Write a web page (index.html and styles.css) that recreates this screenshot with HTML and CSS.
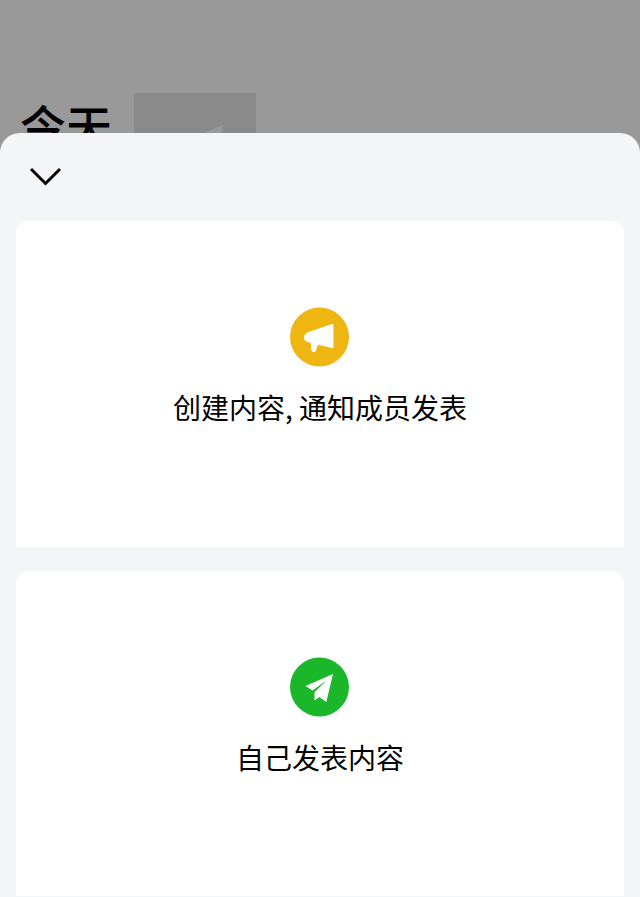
FILE: index.html
```html
<!DOCTYPE html>
<html lang="zh-CN">
<head>
<meta charset="utf-8">
<meta name="viewport" content="width=device-width, initial-scale=1">
<title>发表</title>
<link rel="stylesheet" href="styles.css">
</head>
<body>
<header class="backdrop">
  <h1 class="day">今天</h1>
  <div class="thumb">
    <svg class="thumb-icon" viewBox="0 0 60 60" aria-hidden="true"><path d="M2 25 58 1 46 56 29 44 20 56 18 36Z"/></svg>
  </div>
</header>
<main class="sheet">
  <button class="close" type="button" aria-label="收起">
    <svg viewBox="0 0 32 20" aria-hidden="true"><path d="M1 2 15.500 16.500 30 2"/></svg>
  </button>
  <button class="card" type="button">
    <svg class="badge" viewBox="0 0 60 60" aria-hidden="true">
      <circle class="amber" cx="29.500" cy="30" r="29.500"/>
      <path class="glyph" d="M18.500 25 42 17Q43.500 16.500 43.500 18V40Q43.500 41.500 42 41L28 37.700 26 43.500Q25.500 45 24 45H23Q21.500 45 21.500 43.500L20.700 36 17.500 35Q14 33.500 14 30.500 14 26.500 18.500 25Z"/>
    </svg>
    <span>创建内容, 通知成员发表</span>
  </button>
  <button class="card" type="button">
    <svg class="badge" viewBox="0 0 60 60" aria-hidden="true">
      <circle class="green" cx="29.500" cy="30" r="29.500"/>
      <path class="glyph" d="M43 17 15.500 29 22.500 33.500 36.500 23.500 24.500 35.300V43.500L29.400 40 36.300 45Z"/>
    </svg>
    <span>自己发表内容</span>
  </button>
</main>
</body>
</html>
```
FILE: styles.css
```css
* {
  box-sizing: border-box;
}

body {
  margin: 0;
  min-height: 100vh;
  display: flex;
  flex-direction: column;
  background: #999;
  color: #000;
  font-family: "Noto Sans CJK SC", sans-serif;
}

.backdrop {
  height: 133px;
  padding: 93px 20px 0;
  display: flex;
  gap: 22px;
  overflow: hidden;
}

.day {
  margin: 0;
  font-size: 46px;
  line-height: 62px;
  font-weight: 500;
}

.thumb {
  width: 122px;
  height: 122px;
  flex: none;
  display: grid;
  place-items: center;
  background: #8a8a8a;
}

.thumb-icon {
  width: 60px;
  height: 60px;
  fill: #999;
}

.sheet {
  flex: 1;
  display: flex;
  flex-direction: column;
  gap: 24px;
  padding: 32px 16px 1px;
  border-radius: 20px 20px 0 0;
  background: #f4f5f7;
}

button {
  border: 0;
  color: inherit;
  font: inherit;
  cursor: pointer;
}

.close {
  align-self: flex-start;
  width: 60px;
  height: 32px;
  padding: 0 14px 8px;
  background: none;
}

.close svg {
  display: block;
  width: 32px;
  height: 20px;
  fill: none;
  stroke: #000;
  stroke-width: 3px;
}

.card {
  flex: 1;
  min-height: 280px;
  display: flex;
  flex-direction: column;
  align-items: center;
  justify-content: center;
  gap: 19px;
  padding: 0 16px 32px;
  border-radius: 12px 12px 0 0;
  background: #fff;
  font-size: 28px;
  line-height: 42px;
}

.badge {
  width: 60px;
  height: 60px;
}

.amber {
  fill: #efb510;
}

.green {
  fill: #1ab72a;
}

.glyph {
  fill: #fff;
}
```
